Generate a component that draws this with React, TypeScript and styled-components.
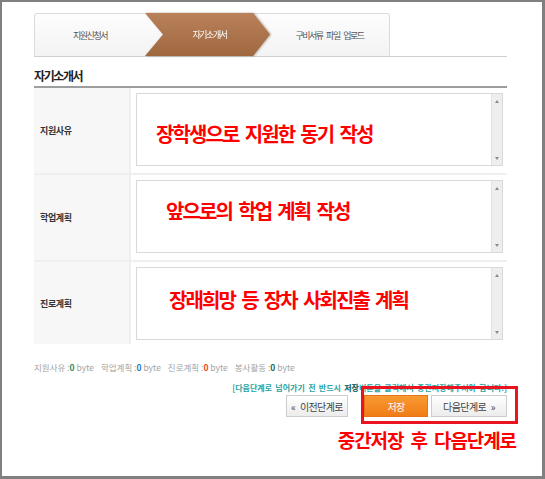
import styled, { createGlobalStyle } from "styled-components";

const GlobalStyle = createGlobalStyle`
  html, body {
    margin: 0;
    padding: 0;
    background: #fff;
  }
  body {
    font-family: "Noto Sans CJK KR", "Noto Sans", sans-serif;
  }
`;

const Frame = styled.div`
  width: 545px;
  height: 479px;
  box-sizing: border-box;
  border: 2px solid #808080;
  border-right-width: 3px;
  border-bottom-width: 3px;
  background: #fff;
  padding: 11px 0 0 32px;
`;

const Content = styled.div`
  width: 473px;
`;

const TabBar = styled.div`
  display: flex;
  width: 356px;
  height: 43px;
  box-sizing: border-box;
  border: 1px solid #dcdcdc;
  border-bottom: none;
  border-radius: 3px 3px 0 0;
  background: linear-gradient(#fdfdfd, #f3f3f3);
`;

const Tab = styled.div<{ $width?: number }>`
  flex: ${(p) => (p.$width ? `0 0 ${p.$width}px` : "1")};
  display: flex;
  align-items: center;
  justify-content: center;
  font-size: 9px;
  letter-spacing: -1.5px;
  word-spacing: 3px;
  color: #555;
`;

const ActiveTabWrap = styled.div`
  flex: 0 0 125px;
  height: 43px;
  margin-top: -1px;
  filter: drop-shadow(1px 0 1px rgba(70, 35, 10, 0.4));
`;

const ActiveTab = styled.div`
  height: 100%;
  display: flex;
  align-items: center;
  justify-content: center;
  padding-left: 4px;
  box-sizing: border-box;
  clip-path: polygon(0 0, 108px 0, 125px 50%, 108px 100%, 0 100%, 18px 50%);
  background: linear-gradient(#b9815a, #a0683f);
  color: #fff;
  font-size: 9px;
  letter-spacing: -1.5px;
`;

const TabLine = styled.div`
  height: 1px;
  background: #cfcfcf;
`;

const Heading = styled.h2`
  margin: 0;
  padding-top: 9px;
  height: 20px;
  line-height: 20px;
  font-size: 12px;
  font-weight: 700;
  letter-spacing: -1.4px;
  color: #222;
  border-bottom: 2px solid #9d9d9d;
`;

const Row = styled.div<{ $last?: boolean }>`
  display: flex;
  border-bottom: ${(p) => (p.$last ? "none" : "2px solid #efefef")};
`;

const LabelCell = styled.div`
  flex: none;
  width: 97px;
  box-sizing: border-box;
  padding-left: 6px;
  display: flex;
  align-items: center;
  background: #f8f7f7;
  border-right: 2px solid #f0eeee;
  font-size: 9px;
  font-weight: 700;
  letter-spacing: -0.4px;
  color: #333;
`;

const FieldCell = styled.div<{ $last?: boolean }>`
  flex: 1;
  padding: 5px 4px ${(p) => (p.$last ? 4 : 7)}px 5px;
`;

const TextBox = styled.div`
  height: 73px;
  box-sizing: border-box;
  display: flex;
  border: 1px solid #d9d9d9;
  background: #fff;
`;

const TextValue = styled.div<{ $x: number; $y: number }>`
  flex: 1;
  padding: ${(p) => p.$y}px 0 0 ${(p) => p.$x}px;
  font-size: 20px;
  line-height: 20px;
  font-weight: 700;
  letter-spacing: -1.9px;
  word-spacing: 3.5px;
  color: #ff0000;
  white-space: nowrap;
`;

const Scrollbar = styled.div`
  width: 11px;
  flex: none;
  box-sizing: border-box;
  padding: 6px 0 5px;
  display: flex;
  flex-direction: column;
  align-items: center;
  justify-content: space-between;
  background: #eeeeee;
  border-left: 1px solid #e2e2e2;
`;

const Arrow = styled.span<{ $down?: boolean }>`
  width: 0;
  height: 0;
  border-left: 2px solid transparent;
  border-right: 2px solid transparent;
  border-bottom: ${(p) => (p.$down ? "none" : "3px solid #8a8a8a")};
  border-top: ${(p) => (p.$down ? "3px solid #8a8a8a" : "none")};
`;

const ByteLine = styled.div`
  margin-top: 17px;
  display: flex;
  gap: 7px;
  font-size: 8.5px;
  line-height: 12px;
  color: #a3a3a3;
`;

const ByteCount = styled.b<{ $color: string }>`
  color: ${(p) => p.$color};
`;

const ButtonArea = styled.div`
  position: relative;
  margin-top: 9px;
`;

const Notice = styled.div`
  text-align: right;
  font-size: 8px;
  line-height: 12px;
  font-weight: 700;
  letter-spacing: 0;
  word-spacing: 1.5px;
  color: #28a3a3;
  white-space: nowrap;

  strong {
    color: #1d6e6e;
  }
`;

const ButtonRow = styled.div`
  display: flex;
  justify-content: flex-end;
  margin-top: 1px;
`;

const Button = styled.button<{ $width: number; $gap?: number; $primary?: boolean }>`
  width: ${(p) => p.$width}px;
  height: 22px;
  margin-left: ${(p) => p.$gap ?? 0}px;
  padding: 0;
  box-sizing: border-box;
  border: 1px solid ${(p) => (p.$primary ? "#e8741a" : "#cdcdcd")};
  background: ${(p) =>
    p.$primary
      ? "linear-gradient(#f99a32, #f07c17)"
      : "linear-gradient(#ffffff, #ececec)"};
  color: ${(p) => (p.$primary ? "#fff" : "#444")};
  font-family: inherit;
  font-size: 10px;
  letter-spacing: -0.6px;
  word-spacing: 3px;
  cursor: pointer;
`;

const RedBox = styled.div`
  position: absolute;
  top: 4px;
  right: -11px;
  width: 157px;
  height: 38px;
  box-sizing: border-box;
  border: 3px solid #ea1320;
  pointer-events: none;
`;

const Caption = styled.div`
  margin-top: 13px;
  margin-right: -9px;
  text-align: right;
  font-size: 19px;
  line-height: 20px;
  font-weight: 700;
  letter-spacing: -1.1px;
  word-spacing: 4px;
  color: #ff0000;
`;

const fields = [
  { label: "지원사유", text: "장학생으로 지원한 동기 작성", x: 19, y: 30 },
  { label: "학업계획", text: "앞으로의 학업 계획 작성", x: 29, y: 20 },
  { label: "진로계획", text: "장래희망 등 장차 사회진출 계획", x: 32, y: 22 },
];

const counts = [
  { label: "지원사유", color: "#2a8a68" },
  { label: "학업계획", color: "#2f72c4" },
  { label: "진로계획", color: "#f23d12" },
  { label: "봉사활동", color: "#1f6650" },
];

export default function App() {
  return (
    <>
      <GlobalStyle />
      <Frame>
        <Content>
          <TabBar>
            <Tab $width={110}>지원신청서</Tab>
            <ActiveTabWrap>
              <ActiveTab>자기소개서</ActiveTab>
            </ActiveTabWrap>
            <Tab>구비서류 파일 업로드</Tab>
          </TabBar>
          <TabLine />
          <Heading>자기소개서</Heading>
          {fields.map((f, i) => {
            const last = i === fields.length - 1;
            return (
              <Row key={f.label} $last={last}>
                <LabelCell>{f.label}</LabelCell>
                <FieldCell $last={last}>
                  <TextBox>
                    <TextValue $x={f.x} $y={f.y}>
                      {f.text}
                    </TextValue>
                    <Scrollbar>
                      <Arrow />
                      <Arrow $down />
                    </Scrollbar>
                  </TextBox>
                </FieldCell>
              </Row>
            );
          })}
          <ByteLine>
            {counts.map((c) => (
              <span key={c.label}>
                {c.label} :<ByteCount $color={c.color}>0</ByteCount> byte
              </span>
            ))}
          </ByteLine>
          <ButtonArea>
            <Notice>
              [다음단계로 넘어가기 전 반드시 <strong>저장</strong>버튼을 클릭해서
              중간저장해주셔야 합니다.]
            </Notice>
            <ButtonRow>
              <Button $width={62}>« 이전단계로</Button>
              <Button $width={64} $gap={16} $primary>
                저장
              </Button>
              <Button $width={76} $gap={3}>
                다음단계로 »
              </Button>
            </ButtonRow>
            <RedBox />
          </ButtonArea>
          <Caption>중간저장 후 다음단계로</Caption>
        </Content>
      </Frame>
    </>
  );
}
